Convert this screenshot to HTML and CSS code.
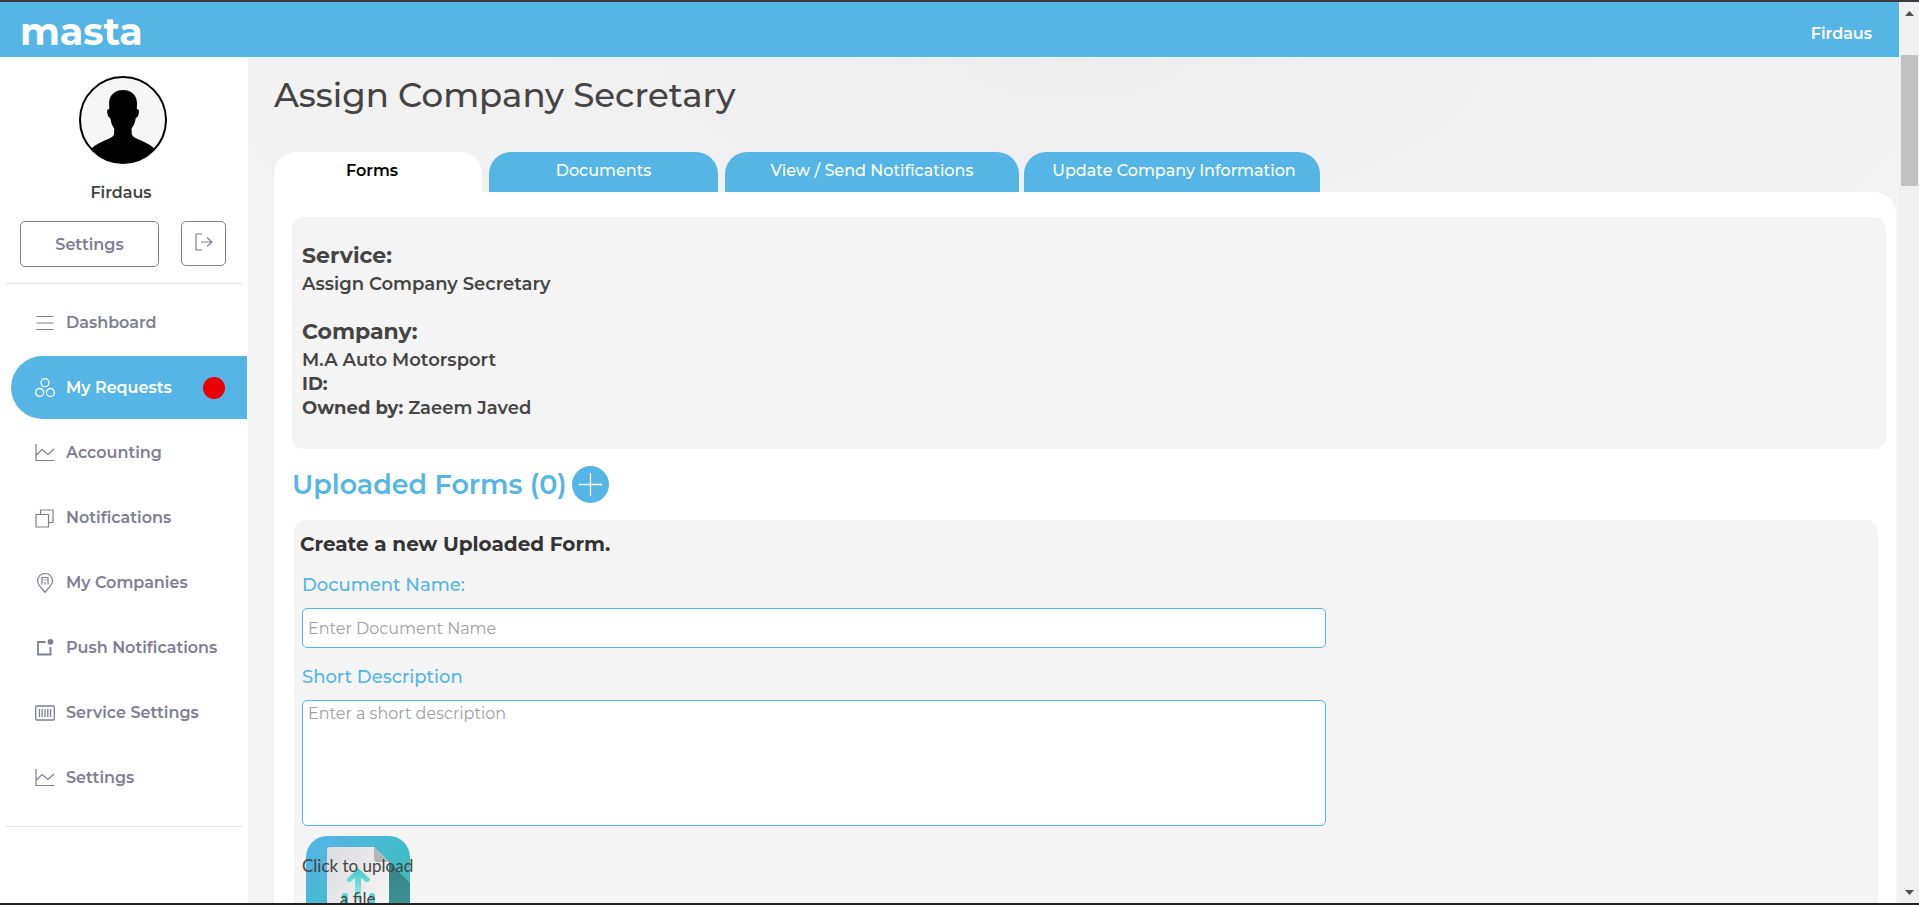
FILE: index.html
```html
<!DOCTYPE html>
<html lang="en">
<head>
<meta charset="utf-8">
<title>Assign Company Secretary</title>
<link rel="stylesheet" href="styles.css">
</head>
<body>
<svg class="defs" width="0" height="0" aria-hidden="true">
  <symbol id="chart" viewBox="0 0 20 20"><path d="M1 1v16.500h18.500M1.500 12l5.500-5.500 6 5L19 6" fill="none" stroke="currentColor" stroke-width="1.200"/></symbol>
</svg>
<div class="app">
  <div class="page">
    <header class="topbar">
      <a class="logo" href="#">masta</a>
      <a class="account" href="#">Firdaus</a>
    </header>
    <div class="body">
      <aside class="sidebar">
        <svg class="avatar" viewBox="0 0 88 88" role="img" aria-label="Profile picture">
          <defs>
            <clipPath id="disc"><circle cx="44" cy="44" r="43"/></clipPath>
            <pattern id="dots" width="4" height="4" patternUnits="userSpaceOnUse"><rect width="4" height="4" fill="#f7f7f7"/><path d="M0 0h1v1H0zM2 2h1v1H2z" fill="#eeeeee"/></pattern>
          </defs>
          <circle cx="44" cy="44" r="43" fill="url(#dots)" stroke="#000" stroke-width="2"/>
          <path clip-path="url(#disc)" d="M44 14c9 0 14 6 14 13l-.2 6c2 0 2.400 1.500 2 4-.5 3-1.300 4.800-3 5-.8 5-2.300 8-4.200 10.500l.2 6c2 5 14 6 22 13.500L76 90H12l1-18c8-7.500 20-8.500 22-13.500l.2-6C33.300 50 32 47 31.300 42c-1.700-.2-2.500-2-3-5-.4-2.500 0-4 2-4l-.2-6c0-7 5-13 13.900-13z"/>
        </svg>
        <p class="user-name">Firdaus</p>
        <div class="user-actions">
          <button class="btn btn-wide" type="button">Settings</button>
          <button class="btn btn-icon" type="button" aria-label="Log out">
            <svg width="18" height="18" viewBox="0 0 18 18" fill="none" stroke="currentColor" stroke-width="1.200"><path d="M7 1H1v16h6M6 9h11M12 4.500L17 9l-5 4.500"/></svg>
          </button>
        </div>
        <nav class="menu">
          <a class="item" href="#"><svg class="ico" viewBox="0 0 20 20"><path d="M1.500 3.500h17M1.500 10h17M1.500 16.500h17" stroke="currentColor" stroke-width="1.200"/></svg>Dashboard</a>
          <a class="item active" href="#"><svg class="ico" viewBox="0 0 20 20" fill="none" stroke="currentColor" stroke-width="1.300"><circle cx="10" cy="4.700" r="4"/><circle cx="4.600" cy="14.500" r="4"/><circle cx="15.400" cy="14.500" r="4"/></svg>My Requests<span class="alert"></span></a>
          <a class="item" href="#"><svg class="ico"><use href="#chart"/></svg>Accounting</a>
          <a class="item" href="#"><svg class="ico" viewBox="0 0 20 20" fill="none" stroke="currentColor" stroke-width="1.200"><path d="M1 6.500h12.500V19H1zM5.500 6.500V2H18v12.500h-4.500"/></svg>Notifications</a>
          <a class="item" href="#"><svg class="ico" viewBox="0 0 20 20" fill="none" stroke="currentColor" stroke-width="1.200"><path d="M10 19.500C6 14.500 2.500 11.500 2.500 8a7.500 7.500 0 0 1 15 0c0 3.500-3.500 6.500-7.500 11.500zM7 11.500v-7h6v7M9 6.500v1M11 6.500v1M10 9v2.500"/></svg>My Companies</a>
          <a class="item" href="#"><svg class="ico" viewBox="0 0 20 20"><path d="M10.500 4H3v12.500h12.500V9" fill="none" stroke="currentColor" stroke-width="1.800"/><circle cx="15.500" cy="3.800" r="2.900" fill="currentColor"/></svg>Push Notifications</a>
          <a class="item" href="#"><svg class="ico" viewBox="0 0 20 20" fill="none" stroke="currentColor" stroke-width="1.300"><rect x=".7" y="3" width="18.600" height="14" rx="1"/><path d="M4.500 6v8M7.200 6v8M10 6v8M12.800 6v8M15.500 6v8"/></svg>Service Settings</a>
          <a class="item" href="#"><svg class="ico"><use href="#chart"/></svg>Settings</a>
        </nav>
      </aside>
      <main class="main">
        <h1 class="title">Assign Company Secretary</h1>
        <div class="tabs" role="tablist">
          <button class="tab current" type="button" role="tab" aria-selected="true">Forms</button>
          <button class="tab documents" type="button" role="tab">Documents</button>
          <button class="tab notify" type="button" role="tab">View / Send Notifications</button>
          <button class="tab company" type="button" role="tab">Update Company Information</button>
        </div>
        <div class="panel">
          <section class="card summary">
            <h2 class="label">Service:</h2>
            <p class="value">Assign Company Secretary</p>
            <h2 class="label second">Company:</h2>
            <p class="value">M.A Auto Motorsport</p>
            <p class="value"><b>ID:</b></p>
            <p class="value"><b>Owned by:</b> Zaeem Javed</p>
          </section>
          <div class="section-head">
            <h2 class="section-title">Uploaded Forms (0)</h2>
            <button class="add" type="button" aria-label="Add form"><svg width="37" height="37" viewBox="0 0 37 37"><path d="M7 18.500h23M18.500 7v23" stroke="#fff" stroke-width="1.300"/></svg></button>
          </div>
          <form class="card form">
            <h3 class="form-title">Create a new Uploaded Form.</h3>
            <label class="field-label" for="doc">Document Name:</label>
            <input class="field" id="doc" type="text" placeholder="Enter Document Name">
            <label class="field-label" for="desc">Short Description</label>
            <textarea class="field area" id="desc" placeholder="Enter a short description"></textarea>
            <button class="upload" type="button">
              <svg class="upload-art" viewBox="0 0 104 104" aria-hidden="true">
                <defs>
                  <linearGradient id="tile" x1="0" y1="0" x2="1" y2="1"><stop offset="0" stop-color="#55b6e8"/><stop offset=".2" stop-color="#4fb6de"/><stop offset=".6" stop-color="#3fbdc4"/><stop offset="1" stop-color="#35b9b0"/></linearGradient>
                  <linearGradient id="sheet" x1="0" y1="0" x2="1" y2="1"><stop offset="0" stop-color="#dcdcde"/><stop offset="1" stop-color="#fafafa"/></linearGradient>
                  <linearGradient id="shade" x1="0" y1="0" x2="0" y2="1"><stop offset="0" stop-color="#357f82"/><stop offset="1" stop-color="#3fa5a2"/></linearGradient>
                  <linearGradient id="arrow" x1="0" y1="0" x2="0" y2="1"><stop offset="0" stop-color="#45c8cc"/><stop offset="1" stop-color="#a5f0ea"/></linearGradient>
                </defs>
                <rect width="104" height="104" rx="21" fill="url(#tile)"/>
                <path d="M83 26l21 21v36a21 21 0 0 1-21 21z" fill="url(#shade)"/>
                <path d="M24 11h44l15 15v66H24a3 3 0 0 1-3-3V14a3 3 0 0 1 3-3z" fill="url(#sheet)"/>
                <path d="M68 11l15 15H71a3 3 0 0 1-3-3z" fill="#b5b5b7"/>
                <path d="M52 32l12 11q0 3-4 3l-5-4v23h-6V42l-5 4q-4 0-3-3z" fill="url(#arrow)"/>
                <path d="M39 60v14h27V60" fill="none" stroke="#5bd2d0" stroke-width="6" stroke-linecap="round"/>
              </svg>
              <span class="upload-text">Click to upload<br>a file</span>
            </button>
          </form>
        </div>
      </main>
    </div>
  </div>
  <div class="scroll" aria-hidden="true">
    <svg class="caret" viewBox="0 0 20 18"><path d="M6 14l4.500-5 4.500 5z"/></svg>
    <div class="thumb"></div>
    <svg class="caret last" viewBox="0 0 20 18"><path d="M6 5l4.500 5L15 5z"/></svg>
  </div>
</div>
</body>
</html>
```

FILE: styles.css
```css
:root {
  --blue: #55b6e5;
  --grey: #7e7e92;
  --ink: #444444;
  --soft: #f4f4f4;
}

* { box-sizing: border-box; }

body {
  margin: 0;
  font-family: Montserrat, Inter, sans-serif;
  color: var(--ink);
}

h1, h2, h3, p { margin: 0; }
a { color: inherit; text-decoration: none; }
button, input, textarea { font: inherit; }

.defs { position: absolute; }

.app {
  display: flex;
  height: 100vh;
  overflow: hidden;
  border-top: 2px solid #3c3a40;
  border-bottom: 2px solid #222124;
}

.page {
  flex: 1;
  min-width: 0;
  display: flex;
  flex-direction: column;
}

.topbar {
  flex: none;
  display: flex;
  align-items: center;
  justify-content: space-between;
  height: 55px;
  padding: 0 27px 0 20px;
  background: var(--blue);
  color: #fff;
}

.logo { padding-top: 5px; font-size: 38px; font-weight: 700; line-height: 48px; }
.account { padding-top: 8px; font-size: 16px; font-weight: 600; }

.body {
  flex: 1;
  min-height: 0;
  display: flex;
}

/* Sidebar */
.sidebar {
  flex: none;
  width: 248px;
  padding-top: 19px;
  background: #fff;
}

.avatar { display: block; width: 88px; height: 88px; margin-left: 79px; }

.user-name {
  padding: 19px 6px 0 0;
  font-size: 16px;
  font-weight: 600;
  line-height: 20px;
  text-align: center;
}

.user-actions {
  display: flex;
  gap: 22px;
  margin: 0 6px;
  padding: 18px 14px 16px;
  border-bottom: 1px solid #e2e2e2;
}

.btn {
  height: 46px;
  border: 1px solid var(--grey);
  border-radius: 5px;
  background: #fff;
  color: var(--grey);
  font-size: 16px;
  font-weight: 600;
}

.btn-wide { width: 139px; }
.btn-icon { width: 45px; height: 45px; padding: 0; }

.menu {
  display: grid;
  gap: 2px;
  margin: 0 6px;
  padding: 7px 0 17px;
  border-bottom: 1px solid #e2e2e2;
}

.item {
  display: flex;
  align-items: center;
  gap: 11px;
  height: 63px;
  padding-left: 29px;
  color: var(--grey);
  font-size: 16px;
  font-weight: 600;
}

.ico { flex: none; width: 20px; height: 20px; }

.item.active {
  margin: 0 -5px 0 5px;
  padding-left: 24px;
  border-radius: 32px 0 0 32px;
  background: var(--blue);
  color: #fff;
}

.alert {
  width: 22px;
  height: 22px;
  margin: 0 22px 0 auto;
  border-radius: 50%;
  background: #ea0000;
}

/* Main column */
.main {
  flex: 1;
  min-width: 0;
  padding: 16px 3px 0 26px;
  background: radial-gradient(ellipse 60% 45% at 50% 0, #eeeeef, #f3f3f3);
}

.title {
  font-size: 34px;
  font-weight: 500;
  line-height: 44px;
}

.tabs { display: flex; padding-top: 35px; }

.tab {
  height: 40px;
  margin-right: 7px;
  padding: 0 0 3px;
  border: 0;
  border-radius: 22px 22px 0 0;
  background: var(--blue);
  color: #fff;
  font-size: 16px;
  font-weight: 500;
}

.tab.current { width: 208px; padding-right: 12px; background: #fff; color: #000; font-weight: 600; }
.documents { width: 229px; }
.notify { width: 294px; margin-right: 5px; }
.company { width: 296px; padding-left: 4px; }

.panel {
  padding: 25px 10px 0 18px;
  border-radius: 0 22px 0 0;
  background: #fff;
}

.card { border-radius: 12px; background: var(--soft); }

.summary { padding: 24px 10px 29px; }
.label { padding-bottom: 1px; font-size: 22px; font-weight: 700; line-height: 30px; }
.label.second { padding-top: 21px; }
.value { font-size: 18px; font-weight: 600; line-height: 24px; }
.value b { font-weight: 700; }

.section-head {
  display: flex;
  align-items: center;
  gap: 5px;
  padding: 17px 0;
}

.section-title { color: var(--blue); font-size: 27px; font-weight: 600; line-height: 36px; }

.add {
  width: 37px;
  height: 37px;
  padding: 0;
  border: 0;
  border-radius: 50%;
  background: var(--blue);
}

.add svg { display: block; }

.form {
  margin: 0 8px 0 2px;
  padding: 12px 8px 0;
}

.form-title {
  margin-left: -2px;
  color: #333;
  font-size: 20px;
  font-weight: 700;
  line-height: 24px;
}

.field-label {
  display: block;
  padding-top: 17px;
  color: var(--blue);
  font-size: 18px;
  font-weight: 500;
  line-height: 24px;
}

.field {
  display: block;
  width: 65.3%;
  height: 40px;
  margin-top: 11px;
  padding: 0 5px;
  border: 1px solid var(--blue);
  border-radius: 5px;
  background: #fff;
  font-size: 16px;
}

.field::placeholder { color: #a0a0a0; font-weight: 400; opacity: 1; }
.area { height: 126px; padding-top: 3px; resize: none; }

.upload {
  display: grid;
  width: 110px;
  margin-top: 10px;
  padding: 0;
  border: 0;
  background: none;
  color: var(--ink);
  font-family: Lato, sans-serif;
  font-size: 17px;
  line-height: 33px;
}

.upload-art, .upload-text { grid-area: 1 / 1; justify-self: center; }
.upload-art { width: 104px; height: 104px; }
.upload-text { padding-top: 13px; white-space: nowrap; }

/* Scrollbar */
.scroll {
  flex: none;
  display: flex;
  flex-direction: column;
  width: 20px;
  background: #f0f0f0;
}

.caret { width: 20px; height: 18px; fill: #505050; }
.caret.last { margin-top: auto; }
.thumb { height: 131px; margin: 35px 1px 0 2px; background: #c1c1c1; }
```
